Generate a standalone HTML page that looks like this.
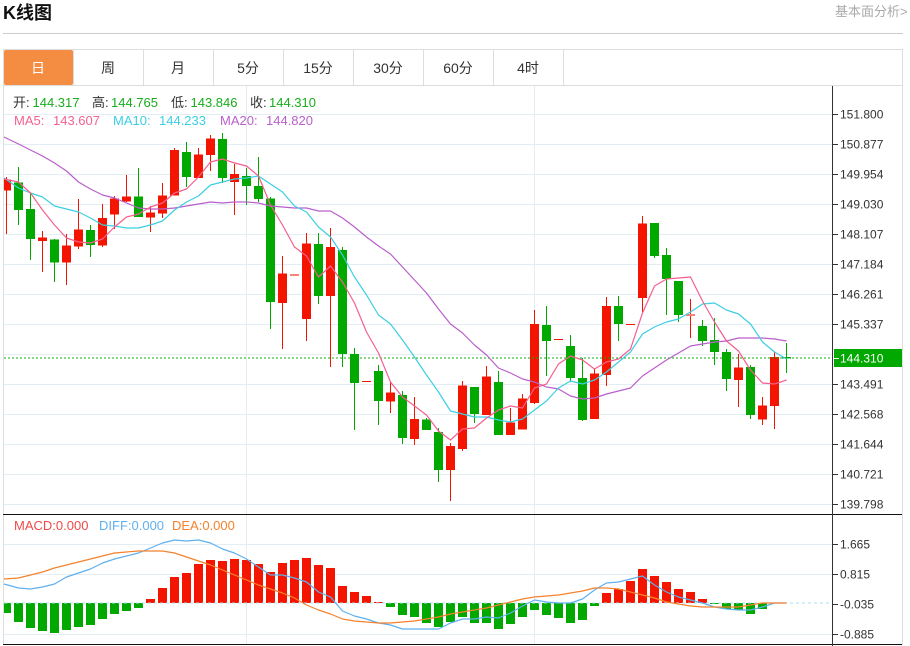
<!DOCTYPE html>
<html lang="zh"><head><meta charset="utf-8"><title>K线图</title>
<style>
html,body{margin:0;padding:0;background:#fff;width:910px;height:646px;overflow:hidden}
svg{display:block}
text{font-family:"Liberation Sans","Noto Sans CJK SC",sans-serif}
</style></head><body>
<svg width="910" height="646" viewBox="0 0 910 646" xmlns="http://www.w3.org/2000/svg">
<rect width="910" height="646" fill="#fff"/>
<text x="3" y="19" font-size="18" font-weight="700" fill="#111">K线图</text>
<text x="835" y="16" font-size="13" fill="#aaa">基本面分析&gt;</text>
<path d="M3 33.5H903" stroke="#ccc" fill="none"/>
<!-- frame -->
<path d="M3.5 645V49.5H902.5V645M3 85.5H903M73.5 50V85M143.5 50V85M213.5 50V85M283.5 50V85M353.5 50V85M423.5 50V85M493.5 50V85M563.5 50V85" stroke="#ddd" fill="none"/>
<rect x="4" y="50" width="69" height="35" rx="2" fill="#f48c42"/>
<g font-size="14" fill="#333" text-anchor="middle">
<text x="38" y="73" fill="#fff">日</text><text x="108" y="73">周</text><text x="178" y="73">月</text><text x="248" y="73">5分</text><text x="318" y="73">15分</text><text x="388" y="73">30分</text><text x="458" y="73">60分</text><text x="528" y="73">4时</text>
</g>
<!-- grid -->
<path d="M4 114.500H832M4 144.500H832M4 174.500H832M4 204.500H832M4 234.500H832M4 264.500H832M4 294.500H832M4 324.500H832M4 354.500H832M4 384.500H832M4 414.500H832M4 444.500H832M4 474.500H832M4 504.500H832M4 544.500H832M4 574.500H832M4 634.500H832M246.500 86V644M534.500 86V644" stroke="#e3edf4" fill="none"/>
<!-- wicks -->
<path fill="none" stroke="#f41500" d="M6.500 177V234M42.500 231V272M66.500 234V285M78.500 199V249M102.500 204V247M114.500 196V229M126.500 175V202M150.500 206V232M162.500 183V218M174.500 148V195M198.500 148V178M210.500 135V171M234.500 164V215M282.500 256V349M306.500 233V341M330.500 228V367M390.500 382V413M414.500 397V445M450.500 443V501M462.500 381V451M486.500 366V415M510.500 408V435M522.500 394V429M534.500 310V404M594.500 368V419M606.500 297V386M642.500 216V312M690.500 299V338M738.500 354V407M762.500 397V425M774.500 352V429"/>
<path fill="none" stroke="#00a800" d="M18.500 167V225M30.500 193V260M54.500 239V282M90.500 225V257M138.500 168V217M186.500 142V187M222.500 133V183M246.500 168V205M258.500 157V202M270.500 197V329M318.500 233V304M342.500 247V367M354.500 348V430M378.500 365V425M402.500 391V444M426.500 418V430M438.500 428V482M474.500 387V423M498.500 371V435M546.500 306V376M570.500 335V382M582.500 358V421M618.500 296V341M654.500 223V258M666.500 248V315M678.500 281V322M702.500 320V346M714.500 318V365M726.500 349V391M750.500 365V419M786.500 343V373"/>
<!-- bodies -->
<path fill="#f41500" d="M4 179.500h7V190.500h-7zM38 237.500h9V241h-9zM62 245.500h9V262.500h-9zM74 229.500h9V246.500h-9zM98 218h9V245.500h-9zM110 198.500h9V214.500h-9zM122 196.500h9V201.500h-9zM146 212.500h9V217.500h-9zM158 195.500h9V213.500h-9zM170 150h9V195.500h-9zM194 154.500h9V178h-9zM206 138.500h9V155h-9zM230 174h9V182h-9zM278 273.500h9V303h-9zM302 243.500h9V319h-9zM326 247h9V296h-9zM386 392.500h9V401.500h-9zM410 419h9V439h-9zM446 446h9V470h-9zM458 385.500h9V449h-9zM482 376.500h9V415h-9zM506 422.500h9V435h-9zM518 398.500h9V429.500h-9zM530 324h9V403h-9zM590 373.500h9V419h-9zM602 306h9V375h-9zM638 223.500h9V298h-9zM734 367.500h9V380h-9zM758 405.500h9V419.500h-9zM770 357h9V406h-9z"/>
<path fill="#f7837a" d="M290 274h9v2h-9zM686 314h9v2h-9z"/>
<path fill="#f41500" d="M362 381h9v1h-9zM554 339h9v1h-9zM626 324h9v1h-9z"/>
<path fill="#00a800" d="M14 182.500h9V210h-9zM26 209h9V239h-9zM50 239.500h9V262.500h-9zM86 230h9V245h-9zM134 196.500h9V217h-9zM182 152h9V177h-9zM218 139h9V178h-9zM242 176h9V186h-9zM254 186h9V199h-9zM266 198.500h9V302h-9zM314 244h9V296h-9zM338 250h9V354h-9zM350 354h9V383h-9zM374 371h9V401h-9zM398 395h9V438h-9zM422 419.500h9V430h-9zM434 432h9V470h-9zM470 387h9V414h-9zM494 382h9V435h-9zM542 325h9V341h-9zM566 346h9V378h-9zM578 378h9V420h-9zM614 306h9V324h-9zM650 223h9V256h-9zM662 255h9V279h-9zM674 281h9V315h-9zM698 326h9V341h-9zM710 340h9V352h-9zM722 352h9V379h-9zM746 367h9V415h-9zM782 357h9V358.500h-9z"/>
<!-- current price line -->
<path d="M4 358H832" stroke="#0db00d" stroke-dasharray="2 2" fill="none"/>
<!-- MA lines -->
<g fill="none" stroke-width="1.2" stroke-linejoin="round">
<polyline stroke="#ba5fcb" points="4,137 18.500,144 30.500,150 42.500,156 54.500,163 66.500,171 78.500,182 90.500,189 102.500,195 114.500,198 126.500,203 138.500,208 150.500,209 162.500,209 174.500,208 186.500,206 198.500,204 210.500,202 222.500,203 234.500,202 246.500,202 258.500,203 270.500,206 282.500,207 294.500,208 306.500,208 318.500,211 330.500,211 342.500,218 354.500,227 366.500,237 378.500,246 390.500,254 402.500,267 414.500,280 426.500,293 438.500,309 450.500,324 462.500,333 474.500,345 486.500,355 498.500,368 510.500,373 522.500,379 534.500,382 546.500,387 558.500,389 570.500,396 582.500,399 594.500,398 606.500,394 618.500,391 630.500,388 642.500,376 654.500,368 666.500,360 678.500,353 690.500,346 702.500,344 714.500,342 726.500,341 738.500,338 750.500,338 762.500,338 774.500,339 786.500,341"/>
<polyline stroke="#3ccfe2" points="4,178 18.500,188 30.500,193 42.500,197 54.500,206 66.500,209 78.500,212 90.500,218 102.500,225 114.500,226 126.500,228 138.500,228 150.500,225 162.500,221 174.500,210 186.500,202 198.500,196 210.500,185 222.500,182 234.500,179 246.500,178 258.500,176 270.500,184 282.500,192 294.500,206 306.500,212 318.500,227 330.500,237 342.500,255 354.500,277 366.500,295 378.500,315 390.500,324 402.500,340 414.500,357 426.500,375 438.500,392 450.500,411 462.500,414 474.500,417 486.500,417 498.500,420 510.500,422 522.500,419 534.500,410 546.500,401 558.500,388 570.500,381 582.500,384 594.500,380 606.500,372 618.500,362 630.500,352 642.500,334 654.500,327 666.500,322 678.500,319 690.500,312 702.500,304 714.500,303 726.500,310 738.500,314 750.500,324 762.500,342 774.500,352 786.500,359"/>
<polyline stroke="#f4608f" points="4,179 18.500,182 30.500,193 42.500,210 54.500,225 66.500,238 78.500,242 90.500,243 102.500,239 114.500,227 126.500,217 138.500,214 150.500,207 162.500,203 174.500,193 186.500,189 198.500,177 210.500,162 222.500,159 234.500,163 246.500,166 258.500,176 270.500,205 282.500,225 294.500,247 306.500,256 318.500,277 330.500,266 342.500,282 354.500,303 366.500,332 378.500,353 390.500,382 402.500,397 414.500,406 426.500,415 438.500,431 450.500,440 462.500,429 474.500,428 486.500,418 498.500,410 510.500,406 522.500,408 534.500,388 546.500,384 558.500,364 570.500,356 582.500,360 594.500,369 606.500,362 618.500,359 630.500,349 642.500,313 654.500,286 666.500,279 678.500,278 690.500,277 702.500,301 714.500,322 726.500,341 738.500,351 750.500,370 762.500,383 774.500,384 786.500,380"/>
</g>
<!-- MACD bars -->
<path fill="#f41500" d="M146 599h9v4h-9zM158 588h9v15h-9zM170 577h9v26h-9zM182 573h9v30h-9zM194 564h9v39h-9zM206 560h9v43h-9zM218 561h9v42h-9zM230 559h9v44h-9zM242 560h9v43h-9zM254 564h9v39h-9zM266 572h9v31h-9zM278 563h9v40h-9zM290 560h9v43h-9zM302 558h9v45h-9zM314 565h9v38h-9zM326 568h9v35h-9zM338 586h9v17h-9zM350 592h9v11h-9zM362 596h9v7h-9zM374 602h9v1h-9zM602 593h9v10h-9zM614 589h9v14h-9zM626 581h9v22h-9zM638 569h9v34h-9zM650 576h9v27h-9zM662 582h9v21h-9zM674 589h9v14h-9zM686 592h9v11h-9zM698 599h9v4h-9z"/>
<path fill="#00a800" d="M4 603h7v10h-7zM14 603h9v19h-9zM26 603h9v25h-9zM38 603h9v28h-9zM50 603h9v30h-9zM62 603h9v27h-9zM74 603h9v24h-9zM86 603h9v22h-9zM98 603h9v16h-9zM110 603h9v11h-9zM122 603h9v8h-9zM134 603h9v5h-9zM386 603h9v4h-9zM398 603h9v12h-9zM410 603h9v14h-9zM422 603h9v20h-9zM434 603h9v24h-9zM446 603h9v19h-9zM458 603h9v14h-9zM470 603h9v20h-9zM482 603h9v20h-9zM494 603h9v26h-9zM506 603h9v21h-9zM518 603h9v14h-9zM530 603h9v7h-9zM542 603h9v12h-9zM554 603h9v15h-9zM566 603h9v20h-9zM578 603h9v17h-9zM590 603h9v3h-9zM710 603h9v1h-9zM722 603h9v6h-9zM734 603h9v7h-9zM746 603h9v11h-9zM758 603h9v6h-9z"/>
<path d="M4 603H832" stroke="#a6e2f2" stroke-dasharray="3 3" fill="none"/>
<g fill="none" stroke-width="1.2" stroke-linejoin="round">
<polyline stroke="#5fb0f0" points="4,584 18.500,588 30.500,589 42.500,587 54.500,584 66.500,577 78.500,573 90.500,569 102.500,563 114.500,559 126.500,556 138.500,553 150.500,548 162.500,543 174.500,540 186.500,541 198.500,540 210.500,543 222.500,549 234.500,553 246.500,559 258.500,567 270.500,575 282.500,575 294.500,578 306.500,582 318.500,592 330.500,597 342.500,611 354.500,616 366.500,619 378.500,623 390.500,625 402.500,629 414.500,629 426.500,629 438.500,629 450.500,623 462.500,619 474.500,619 486.500,617 498.500,618 510.500,613 522.500,606 534.500,600 546.500,602 558.500,603 570.500,603 582.500,599 594.500,590 606.500,583 618.500,582 630.500,579 642.500,576 654.500,585 666.500,592 678.500,597 690.500,600 702.500,603 714.500,607 726.500,609 738.500,610 750.500,610 762.500,607 774.500,603 786.500,603"/>
<polyline stroke="#f5822c" points="4,579 18.500,578 30.500,575 42.500,572 54.500,568 66.500,565 78.500,562 90.500,559 102.500,556 114.500,553 126.500,552 138.500,551 150.500,551 162.500,551 174.500,553 186.500,557 198.500,561 210.500,565 222.500,570 234.500,575 246.500,580 258.500,585 270.500,589 282.500,593 294.500,598 306.500,605 318.500,610 330.500,614 342.500,619 354.500,621 366.500,622 378.500,623 390.500,623 402.500,622 414.500,621 426.500,619 438.500,617 450.500,614 462.500,612 474.500,610 486.500,608 498.500,605 510.500,602 522.500,599 534.500,597 546.500,596 558.500,595 570.500,593 582.500,591 594.500,588 606.500,588 618.500,589 630.500,592 642.500,595 654.500,598 666.500,602 678.500,604 690.500,606 702.500,607 714.500,607 726.500,607 738.500,607 750.500,605 762.500,603 774.500,603 786.500,603"/>
</g>
<!-- axes -->
<path d="M3 514.500H902M3 644.500H902" stroke="#111" fill="none"/>
<path d="M832.500 86V646" stroke="#333" fill="none"/>
<path d="M833 114.500h5M833 144.500h5M833 174.500h5M833 204.500h5M833 234.500h5M833 264.500h5M833 294.500h5M833 324.500h5M833 384.500h5M833 414.500h5M833 444.500h5M833 474.500h5M833 504.500h5M833 544.500h5M833 574.500h5M833 604.500h5M833 634.500h5" stroke="#333" fill="none"/>
<g font-size="12" fill="#333">
<text x="840" y="118.500">151.800</text><text x="840" y="148.500">150.877</text><text x="840" y="178.500">149.954</text><text x="840" y="208.500">149.030</text><text x="840" y="238.500">148.107</text><text x="840" y="268.500">147.184</text><text x="840" y="298.500">146.261</text><text x="840" y="328.500">145.337</text><text x="840" y="388.500">143.491</text><text x="840" y="418.500">142.568</text><text x="840" y="448.500">141.644</text><text x="840" y="478.500">140.721</text><text x="840" y="508.500">139.798</text>
<text x="840" y="548.500">1.665</text><text x="840" y="578.500">0.815</text><text x="840" y="608.500">-0.035</text><text x="840" y="638.500">-0.885</text>
</g>
<rect x="834" y="349" width="68" height="18" fill="#00a800"/>
<path d="M834 358.500h5" stroke="#fff" fill="none"/>
<text x="840" y="362.500" font-size="12" fill="#fff">144.310</text>
<!-- legends -->
<g font-size="13">
<g fill="#333"><text x="13" y="107">开:</text><text x="92" y="107">高:</text><text x="171" y="107">低:</text><text x="250" y="107">收:</text></g>
<g fill="#17ad1c"><text x="32.500" y="107">144.317</text><text x="111" y="107">144.765</text><text x="190.500" y="107">143.846</text><text x="269" y="107">144.310</text></g>
<text x="14" y="125" fill="#f4608f">MA5:</text><text x="53" y="125" fill="#f4608f">143.607</text>
<text x="113" y="125" fill="#3ccfe2">MA10:</text><text x="159" y="125" fill="#3ccfe2">144.233</text>
<text x="220" y="125" fill="#ba5fcb">MA20:</text><text x="266" y="125" fill="#ba5fcb">144.820</text>
<text x="14" y="530" fill="#f04a4a">MACD:0.000</text>
<text x="99" y="530" fill="#5fb0f0">DIFF:0.000</text>
<text x="172" y="530" fill="#f5822c">DEA:0.000</text>
</g>
</svg>
</body></html>
